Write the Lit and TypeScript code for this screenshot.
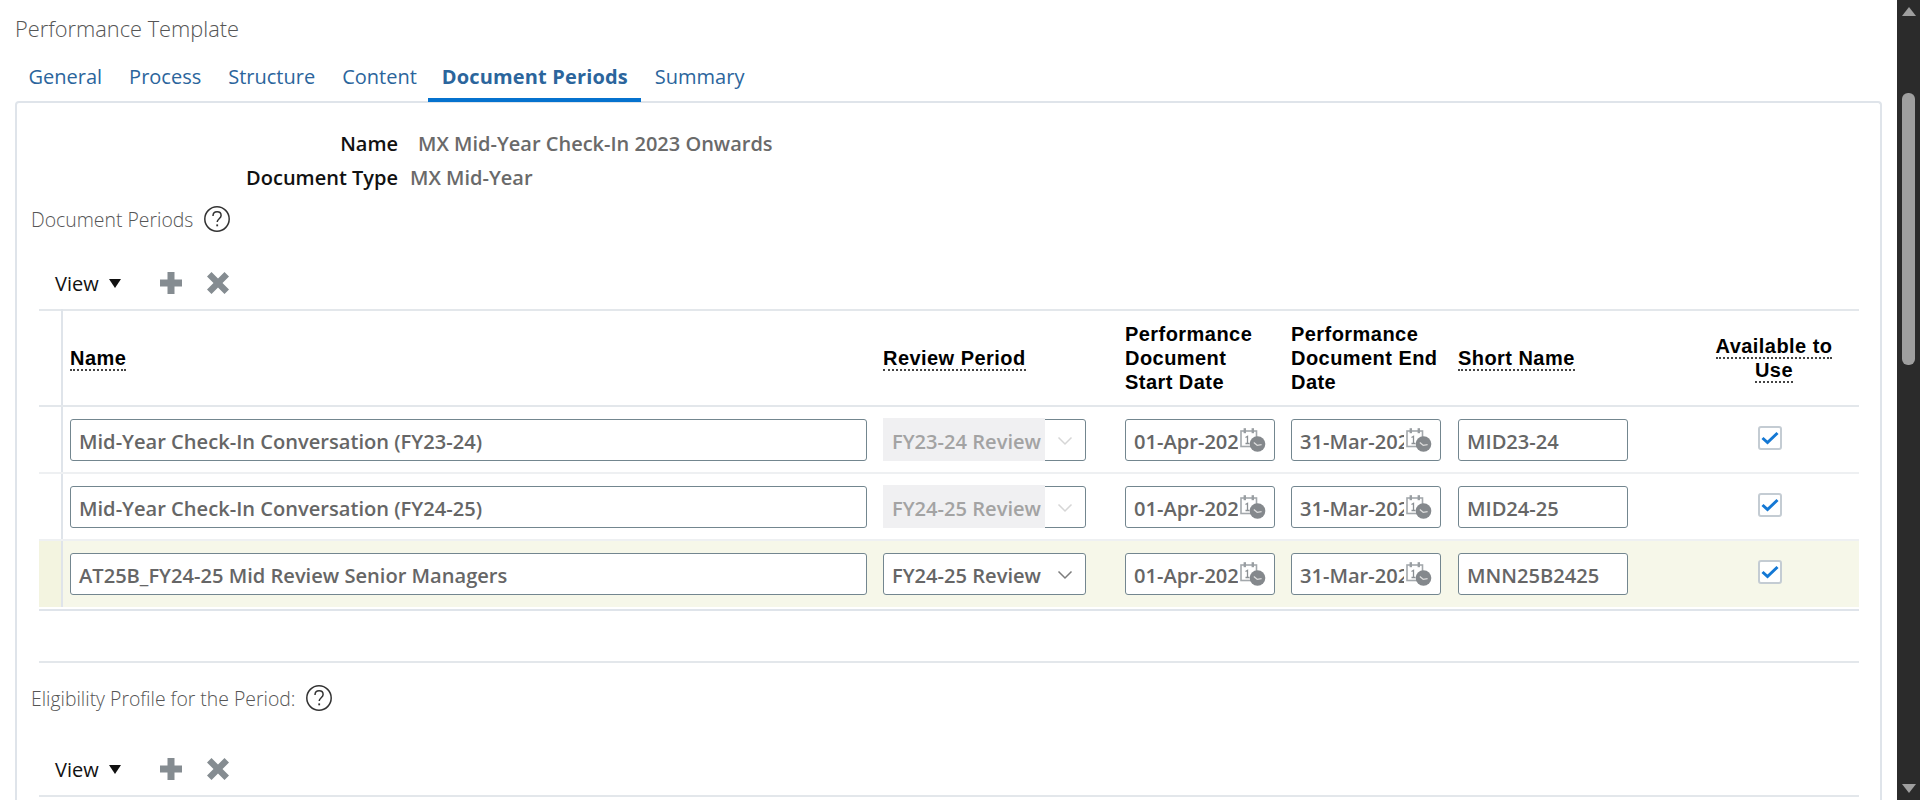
import { LitElement, css, html } from 'lit';
import { customElement } from 'lit/decorators.js';

const rows = [
  { name: 'Mid-Year Check-In Conversation (FY23-24)', review: 'FY23-24 Review', start: '01-Apr-2023', end: '31-Mar-2024', short: 'MID23-24', locked: true },
  { name: 'Mid-Year Check-In Conversation (FY24-25)', review: 'FY24-25 Review', start: '01-Apr-2024', end: '31-Mar-2025', short: 'MID24-25', locked: true },
  { name: 'AT25B_FY24-25 Mid Review Senior Managers', review: 'FY24-25 Review', start: '01-Apr-2024', end: '31-Mar-2025', short: 'MNN25B2425', locked: false },
];

const helpIcon = html`<svg class="help" width="28" height="28" viewBox="0 0 28 28">
  <circle cx="14" cy="14" r="12.2" fill="none" stroke="#333" stroke-width="1.5"></circle>
  <path d="M10 11c0-2.6 1.8-4.2 4.1-4.2 2.4 0 4 1.5 4 3.6 0 3.2-3.9 3.4-3.9 6.6" fill="none" stroke="#333" stroke-width="1.5"></path>
  <rect x="13.3" y="19.4" width="1.8" height="1.9" fill="#333"></rect>
</svg>`;

const calendarIcon = html`<svg class="cal" width="26" height="24" viewBox="0 0 26 24">
  <rect x="1" y="3" width="15.5" height="15.5" fill="#fff" stroke="#a3a8ac" stroke-width="1.6"></rect>
  <rect x="3.6" y="0.2" width="2.4" height="5" fill="#999ea2"></rect>
  <rect x="11.6" y="0.2" width="2.4" height="5" fill="#999ea2"></rect>
  <path d="M5.5 9.5l2-1.2v7M5.5 15.5h4" fill="none" stroke="#8b9094" stroke-width="1.3"></path>
  <circle cx="17.5" cy="16" r="7.8" fill="#84888c"></circle>
  <path d="M13.8 14.5l3.4 2.8 4.4-.6" fill="none" stroke="#dcdcdc" stroke-width="1.2"></path>
</svg>`;

const chevron = html`<svg width="16" height="10" viewBox="0 0 16 10"><path d="M1.5 1.5L8 8l6.5-6.5" fill="none" stroke="currentColor" stroke-width="1.5"></path></svg>`;

const toolbarBody = html`
  <span class="view">View</span><span class="caret"></span>
  <svg class="plus" width="22" height="22" viewBox="0 0 22 22"><path d="M7.5 0h7v7.5H22v7h-7.5V22h-7v-7.5H0v-7h7.5z" fill="#858c91"></path></svg>
  <svg class="cross" width="22" height="22" viewBox="0 0 22 22"><path d="M4.5 0L11 6.5 17.5 0 22 4.5 15.5 11 22 17.5 17.5 22 11 15.5 4.5 22 0 17.5 6.5 11 0 4.5z" fill="#858c91"></path></svg>
`;

@customElement('app-root')
export class AppRoot extends LitElement {
  static styles = css`
    :host {
      display: flex;
      height: 800px;
      overflow: hidden;
      background: #fff;
      font-family: 'Open Sans', 'Noto Sans', sans-serif;
    }
    .page {
      flex: 1;
      min-width: 0;
      padding: 15px 15px 0 15px;
    }
    .title {
      height: 28px;
      line-height: 28px;
      font-size: 21.8px;
      font-weight: 300;
      color: #555;
    }
    .tabs {
      display: flex;
      margin-top: 13px;
      height: 46px;
    }
    .tab {
      padding: 8px 13.5px 0;
      line-height: 26px;
      font-size: 20px;
      color: #2b659c;
      box-sizing: border-box;
    }
    .tab.on {
      margin-left: -2px;
      font-weight: 700;
      letter-spacing: 0.15px;
      border-bottom: 4px solid #0572ce;
    }
    .card {
      height: 800px;
      margin-top: -1px;
      padding: 24px 22px 0 22px;
      border: 2px solid #dfe4ea;
      border-bottom: 0;
      border-radius: 4px 4px 0 0;
      box-sizing: border-box;
    }
    .facts {
      display: grid;
      grid-template-columns: 359px auto;
      font-size: 20px;
      line-height: 34px;
    }
    .facts b {
      text-align: right;
      font-weight: 600;
      color: #111;
    }
    .facts span {
      font-weight: 600;
      color: #6a6a6a;
    }
    .facts .wide { padding-left: 20px; }
    .facts .tight { padding-left: 12px; }
    .section {
      display: flex;
      align-items: center;
      gap: 10px;
      margin: 9px 0 0 -8px;
      height: 30px;
      font-size: 19.4px;
      font-weight: 300;
      color: #555;
    }
    .toolbar {
      display: flex;
      align-items: center;
      height: 32px;
      margin-top: 33px;
      padding-left: 16px;
      font-size: 20px;
      color: #111;
    }
    .caret {
      margin-left: 10px;
      border-left: 6.5px solid transparent;
      border-right: 6.5px solid transparent;
      border-top: 9px solid #111;
    }
    .plus { margin-left: 39px; }
    .cross { margin-left: 25px; }
    table {
      width: 1820px;
      table-layout: fixed;
      border-collapse: collapse;
      margin-top: 10px;
      border-top: 2px solid #e3e7eb;
    }
    th {
      height: 96px;
      padding: 0 16px 0 7px;
      text-align: left;
      vertical-align: middle;
      font-family: 'Liberation Sans', Arial, sans-serif;
      font-size: 20px;
      letter-spacing: 0.45px;
      line-height: 24px;
      font-weight: 700;
      color: #000;
      box-sizing: border-box;
      border-bottom: 2px solid #e3e7eb;
    }
    th.snug { padding-right: 0; }
    th u {
      text-decoration: none;
      border-bottom: 2px dotted #444;
    }
    th.gut, td.gut { border-right: 2px solid #dfe4ea; padding: 0; }
    th.avail {
      text-align: center;
      white-space: nowrap;
      padding: 0 12px 0 0;
    }
    td {
      height: 67px;
      padding: 0 7px;
      box-sizing: border-box;
      border-bottom: 2px solid #eef0f2;
    }
    td.name { padding-right: 9px; }
    tr.cur td { background: #f6f7e9; }
    tr.cur td.gut { background: #f3f4e0; }
    .last td { border-bottom: 0; }
    .box {
      display: flex;
      align-items: center;
      height: 42px;
      border: 1.5px solid #73868f;
      border-radius: 3px;
      background: #fff;
      box-sizing: border-box;
      padding: 3px 0 0 8px;
      font-size: 20.1px;
      font-weight: 600;
      color: #666;
      white-space: nowrap;
      overflow: hidden;
    }
    .sel { position: relative; }
    .sel .chev { position: absolute; right: 12px; top: 16px; color: #7c7c7c; display: flex; }
    .sel.off { overflow: visible; }
    .sel.off .fill {
      position: absolute;
      left: -1.5px;
      top: -1.5px;
      bottom: -1.5px;
      width: 162px;
      background: #f0f0f2;
    }
    .sel.off .txt { position: relative; color: #a3a3a3; }
    .sel.off .chev { color: #d6d6d6; }
    .date { width: 150px; position: relative; }
    .date .txt { width: 104px; overflow: hidden; flex: none; }
    .date .cal { position: absolute; left: 114px; top: 8px; }
    .check {
      display: flex;
      align-items: center;
      justify-content: center;
      width: 24px;
      height: 24px;
      margin: -4px 0 0 50px;
      border: 2px solid #c4ccd3;
      border-radius: 3px;
      box-sizing: border-box;
      background: #fff;
    }
    .rule {
      height: 54px;
      width: 1820px;
      border-top: 2px solid #dfe4ea;
      border-bottom: 2px solid #e3e7eb;
      margin-top: 2px;
      box-sizing: border-box;
    }
    .section.second { margin-top: 20px; }
    .toolbar.second { margin-top: 40px; }
    .tail { width: 1820px; border-top: 2px solid #e3e7eb; margin-top: 10px; }
    .bar {
      flex: none;
      width: 23px;
      background: #2b2b2b;
      position: relative;
    }
    .thumb {
      position: absolute;
      left: 5px;
      top: 93px;
      width: 13px;
      height: 272px;
      border-radius: 6px;
      background: #9f9f9f;
    }
    .up, .down {
      position: absolute;
      left: 4.5px;
      border-left: 7px solid transparent;
      border-right: 7px solid transparent;
    }
    .up { top: 7px; border-bottom: 9px solid #9f9f9f; }
    .down { bottom: 7px; border-top: 9px solid #9f9f9f; }
  `;

  render() {
    return html`
      <div class="page">
        <div class="title">Performance Template</div>
        <div class="tabs">
          ${['General', 'Process', 'Structure', 'Content', 'Document Periods', 'Summary'].map(
            (t) => html`<div class="tab ${t === 'Document Periods' ? 'on' : ''}">${t}</div>`
          )}
        </div>
        <div class="card">
          <div class="facts">
            <b>Name</b><span class="wide">MX Mid-Year Check-In 2023 Onwards</span>
            <b>Document Type</b><span class="tight">MX Mid-Year</span>
          </div>
          <div class="section">Document Periods ${helpIcon}</div>
          <div class="toolbar">${toolbarBody}</div>
          <table>
            <colgroup>
              <col style="width:23px" />
              <col style="width:814px" />
              <col style="width:242px" />
              <col style="width:166px" />
              <col style="width:167px" />
              <col style="width:250px" />
              <col />
            </colgroup>
            <thead>
              <tr>
                <th class="gut"></th>
                <th><u>Name</u></th>
                <th><u>Review Period</u></th>
                <th>Performance Document Start Date</th>
                <th class="snug">Performance Document End Date</th>
                <th><u>Short Name</u></th>
                <th class="avail"><u>Available to</u><br /><u>Use</u></th>
              </tr>
            </thead>
            <tbody>
              ${rows.map(
                (r, i) => html`<tr class="${r.locked ? '' : 'cur'} ${i === rows.length - 1 ? 'last' : ''}">
                  <td class="gut"></td>
                  <td class="name"><div class="box">${r.name}</div></td>
                  <td>
                    <div class="box sel ${r.locked ? 'off' : ''}" style="width:203px">
                      ${r.locked ? html`<div class="fill"></div>` : ''}
                      <span class="txt">${r.review}</span><span class="chev">${chevron}</span>
                    </div>
                  </td>
                  <td><div class="box date"><span class="txt">${r.start}</span>${calendarIcon}</div></td>
                  <td><div class="box date"><span class="txt">${r.end}</span>${calendarIcon}</div></td>
                  <td><div class="box" style="width:170px">${r.short}</div></td>
                  <td>
                    <div class="check">
                      <svg width="18" height="14" viewBox="0 0 18 14"><path d="M1.5 7l5 4.5L16.5 2" fill="none" stroke="#1478d4" stroke-width="3"></path></svg>
                    </div>
                  </td>
                </tr>`
              )}
            </tbody>
          </table>
          <div class="rule"></div>
          <div class="section second">Eligibility Profile for the Period: ${helpIcon}</div>
          <div class="toolbar second">${toolbarBody}</div>
          <div class="tail"></div>
        </div>
      </div>
      <div class="bar">
        <div class="up"></div>
        <div class="thumb"></div>
        <div class="down"></div>
      </div>
    `;
  }
}
